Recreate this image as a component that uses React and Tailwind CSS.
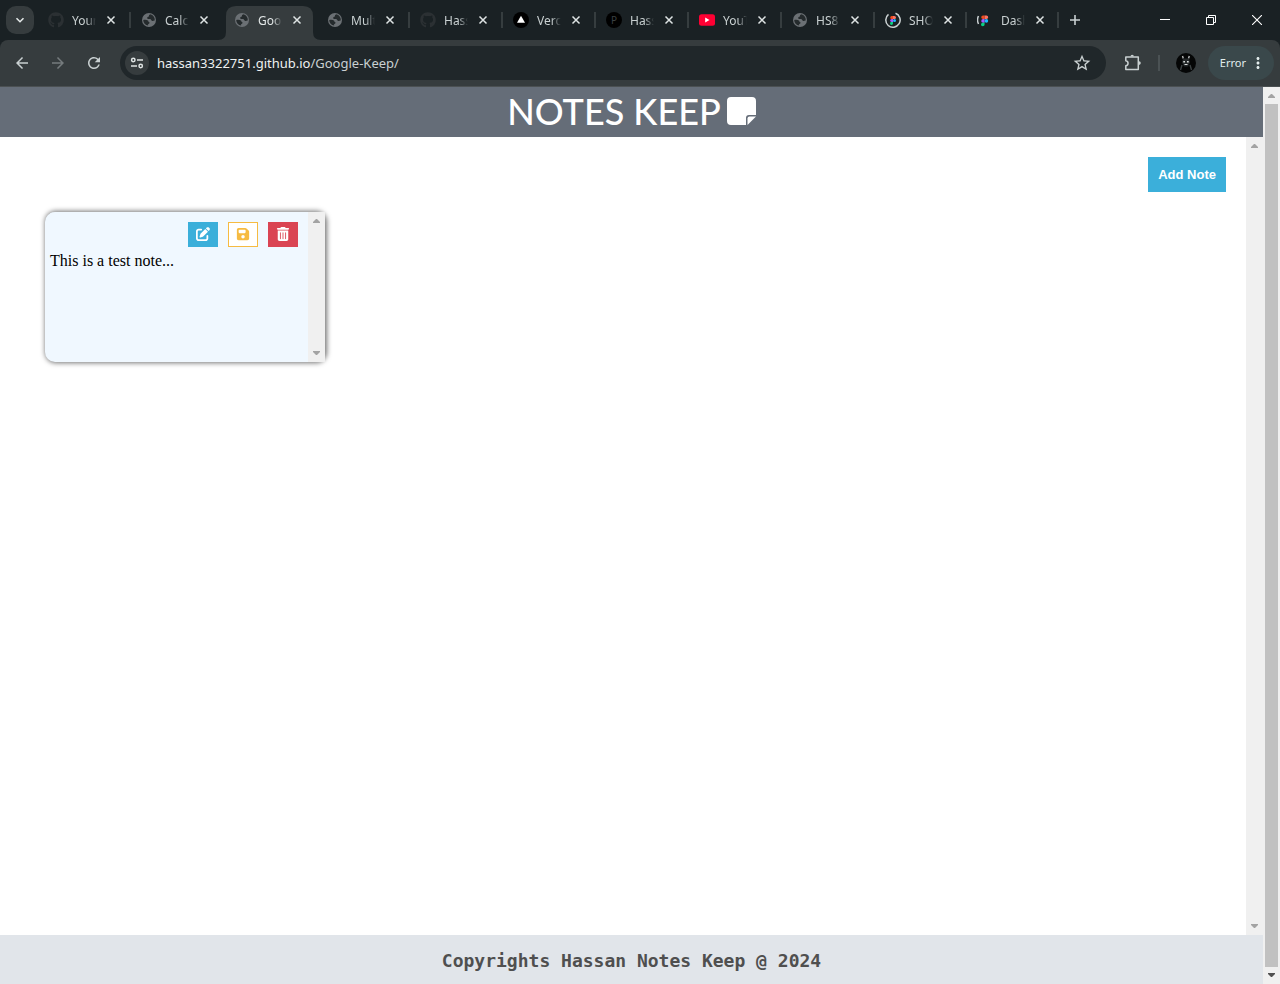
import React from "react";
import { FaGithub } from "react-icons/fa";
import { FaFloppyDisk, FaPenToSquare, FaTrashCan } from "react-icons/fa6";
import { MdArrowBack, MdArrowForward, MdRefresh, MdStarBorder, MdMoreVert } from "react-icons/md";

function Globe() {
  return (
    <svg viewBox="0 0 16 16" className="size-4" aria-hidden="true">
      <circle cx="8" cy="8" r="7" fill="#6b7074" />
      <path d="M9.200 2.300c-.9.600-1.400 1.100-1.200 1.800.3.900-1.900.7-1.900 2 0 1.200 1.600 1 2.800 1 1.500.1 1.100 1.700 2.300 1.900 1 .1 1.500-.5 2.600-.5.200-3-1.600-5.500-4.600-6.200z" fill="#252b2d" />
      <path d="M2.200 8c1.500-.3 3.700-.3 4.700.4.9.600.2 1.500 1.100 1.700 1 .3.600 1.700-.4 1.800-.8.100-.6.900-.3 1.700C4.200 13.200 2.300 10.900 2.200 8z" fill="#252b2d" />
    </svg>
  );
}

function Github() {
  return <FaGithub className="size-4 text-[#2b3033]" aria-hidden="true" />;
}

function Vercel() {
  return (
    <svg viewBox="0 0 16 16" className="size-4" aria-hidden="true">
      <circle cx="8" cy="8" r="8" fill="#000" />
      <path d="M8 3.800l4 7H4z" fill="#fff" />
    </svg>
  );
}

function LetterP() {
  return (
    <span className="flex size-4 items-center justify-center rounded-full bg-black text-[10px] text-[#3b4043]">P</span>
  );
}

function Youtube() {
  return (
    <svg viewBox="0 0 16 16" className="size-4" aria-hidden="true">
      <rect y="2.300" width="16" height="11.400" rx="2.500" fill="#ff0033" />
      <path d="M6.200 5.500v5l4.300-2.500z" fill="#fff" />
    </svg>
  );
}

function FigmaMark() {
  return (
    <g>
      <path d="M8 4H6.700a1.500 1.500 0 0 0 0 3H8z" fill="#f24e1e" />
      <path d="M8 4h1.500a1.500 1.500 0 0 1 0 3H8z" fill="#ff7262" />
      <path d="M8 7H6.700a1.500 1.500 0 0 0 0 3H8z" fill="#a259ff" />
      <circle cx="9.500" cy="8.500" r="1.500" fill="#1abcfe" />
      <path d="M6.700 10H8v1.500A1.500 1.500 0 1 1 6.700 10z" fill="#0acf83" />
    </g>
  );
}

function FigmaRing() {
  return (
    <svg viewBox="0 0 16 16" className="size-4" aria-hidden="true">
      <path d="M3.500 2.400A7.200 7.200 0 1 0 10.500 1.300" fill="none" stroke="#c9d0d1" strokeWidth="1.500" />
      <FigmaMark />
    </svg>
  );
}

function FigmaSmall() {
  return (
    <svg viewBox="0 0 16 16" className="size-4" aria-hidden="true">
      <path d="M1.500 4q-2 4 0 8" fill="none" stroke="#c9d0d1" strokeWidth="1.500" />
      <g transform="translate(-2 -1.300) scale(1.200)"><FigmaMark /></g>
    </svg>
  );
}

const tabs = [
  { title: "Your", Icon: Github, line: true },
  { title: "Calc", Icon: Globe },
  { title: "Goo", Icon: Globe, active: true },
  { title: "Mult", Icon: Globe, line: true },
  { title: "Hass", Icon: Github, line: true },
  { title: "Verc", Icon: Vercel, line: true },
  { title: "Hass", Icon: LetterP, line: true },
  { title: "YouT", Icon: Youtube, line: true },
  { title: "HS8", Icon: Globe, line: true },
  { title: "SHO", Icon: FigmaRing, line: true, narrow: true },
  { title: "Dash", Icon: FigmaSmall, line: true, narrow: true },
];

function CloseIcon() {
  return (
    <svg viewBox="0 0 10 10" className="size-[10px]" fill="none" stroke="currentColor" strokeWidth="1.500" aria-hidden="true">
      <path d="M1.500 1.500l7 7M8.500 1.500l-7 7" />
    </svg>
  );
}

function Tab({ title, Icon, active, line, narrow }) {
  return (
    <li className={"relative flex h-10 items-center " + (narrow ? "w-[92px]" : "w-[93px]")}>
      {active && (
        <svg viewBox="0 0 103 34" className="absolute -left-[6px] bottom-0 h-[34px] w-[103px]" fill="#363c3e" aria-hidden="true">
          <path d="M0 34q8 0 8-8V10Q8 0 18 0h67q10 0 10 10v16q0 8 8 8z" />
        </svg>
      )}
      <div className="relative flex grow items-center pl-[10px]">
        <Icon />
        <span className={"ml-2 w-6 overflow-hidden whitespace-nowrap pt-[2px] text-xs [mask-image:linear-gradient(to_right,#000_60%,transparent)] " + (active ? "text-[#e3e8e8]" : "text-[#c9d0d1]")}>
          {title}
        </span>
        <button type="button" aria-label={"Close tab " + title} className="ml-[7px] flex size-4 items-center justify-center text-[#dfe4e4]">
          <CloseIcon />
        </button>
      </div>
      {line && <span className="h-4 w-[2px] bg-[#363d3f]" />}
    </li>
  );
}

function TabStrip() {
  return (
    <div className="flex h-10 items-center bg-[#1a2124]">
      <button type="button" aria-label="Search tabs" className="ml-[6px] flex size-7 items-center justify-center rounded-[10px] bg-[#363c3e] text-[#e3e8e8]">
        <svg viewBox="0 0 10 10" className="size-[10px]" fill="none" stroke="currentColor" strokeWidth="1.600" aria-hidden="true"><path d="M1.500 3.200L5 6.700l3.500-3.500" /></svg>
      </button>
      <ul className="ml-1 flex">
        {tabs.map((t, i) => <Tab key={i} {...t} />)}
      </ul>
      <button type="button" aria-label="New tab" className="ml-[2px] flex size-7 items-center justify-center text-[#c9d0d1]">
        <svg viewBox="0 0 12 12" className="size-3" stroke="currentColor" strokeWidth="1.600" aria-hidden="true"><path d="M6 1v10M1 6h10" /></svg>
      </button>
      <div className="ml-auto flex text-white">
        <button type="button" aria-label="Minimize" className="flex h-10 w-[46px] items-center justify-center">
          <svg viewBox="0 0 10 10" className="size-[10px]" aria-hidden="true"><path d="M0 4h10v1H0z" fill="currentColor" /></svg>
        </button>
        <button type="button" aria-label="Restore" className="flex h-10 w-[46px] items-center justify-center">
          <svg viewBox="0 0 10 10" className="size-[10px]" fill="none" stroke="currentColor" aria-hidden="true"><path d="M.5 2.500h7v7h-7zM2.500 2.500v-2h7v7h-2" /></svg>
        </button>
        <button type="button" aria-label="Close window" className="flex h-10 w-[46px] items-center justify-center">
          <svg viewBox="0 0 10 10" className="size-[10px]" fill="none" stroke="currentColor" strokeWidth="1.100" aria-hidden="true"><path d="M0 0l10 10M10 0L0 10" /></svg>
        </button>
      </div>
    </div>
  );
}

function Toolbar() {
  return (
    <div className="bg-[#1a2124]">
      <div className="flex h-[47px] items-center rounded-t-lg border-b border-[#4b5052] bg-[#363c3e] pr-[6px] pl-[13px] text-[#c9d0d1]">
        <button type="button" aria-label="Back"><MdArrowBack className="size-[18px]" /></button>
        <button type="button" aria-label="Forward" className="ml-[18px] text-[#757b7d]"><MdArrowForward className="size-[18px]" /></button>
        <button type="button" aria-label="Reload" className="ml-[18px]"><MdRefresh className="size-[18px]" /></button>
        <div className="ml-[17px] flex h-[34px] grow items-center rounded-full bg-[#20272a] pr-[14px] pl-[5px]">
          <button type="button" aria-label="Site information" className="flex size-6 items-center justify-center rounded-full bg-[#363c3e]">
            <svg viewBox="0 0 14 14" className="size-[14px]" fill="none" stroke="#dfe4e4" strokeWidth="1.500" aria-hidden="true">
              <circle cx="3.300" cy="4" r="1.700" /><path d="M7 4h6M1 10h6" /><circle cx="10.700" cy="10" r="1.700" />
            </svg>
          </button>
          <div className="relative ml-2 h-5 grow text-[13px] leading-5">
            <span aria-hidden="true" className="pointer-events-none absolute inset-0 text-[#c9d0d1]">
              <span className="text-[#eef1f1]">hassan3322751.github.io</span>/Google-Keep/
            </span>
            <input aria-label="Address" defaultValue="hassan3322751.github.io/Google-Keep/" className="block h-5 w-full bg-transparent text-transparent outline-none" />
          </div>
          <button type="button" aria-label="Bookmark this page"><MdStarBorder className="size-5" /></button>
        </div>
        <button type="button" aria-label="Extensions" className="ml-[18px]">
          <svg viewBox="0 0 18 18" className="size-[18px]" fill="none" stroke="currentColor" strokeWidth="1.500" strokeLinejoin="round" aria-hidden="true">
            <path d="M1.800 3h12.500v12.500H1.800v-3.700c3-.5 3-4.600 0-5.100z" />
            <path d="M6.500 2.500a1.700 1.700 0 0 1 3.400 0zM15 7.300a1.700 1.700 0 0 1 0 3.600z" fill="currentColor" stroke="none" />
          </svg>
        </button>
        <span className="mx-4 h-4 w-[2px] bg-[#4b5254]" />
        <button type="button" aria-label="Profile">
          <svg viewBox="0 0 20 20" className="size-5" aria-hidden="true">
            <circle cx="10" cy="10" r="10" fill="#050606" />
            <path d="M6.500 3l.8 2.500M13.300 3l-.8 2.500" stroke="#b9bcbc" strokeWidth="1.400" />
            <path d="M7 5.500h6l1 4-2 4H8l-2-4z" fill="#25292a" />
            <path d="M4.500 17l1.500-5M15.500 17L14 12" stroke="#3c4244" strokeWidth="1.400" />
            <path d="M7.300 8H9v1.500H7.300zM11 8h1.700v1.500H11zM8.500 11h3v1h-3z" fill="#d6dada" />
          </svg>
        </button>
        <button type="button" className="ml-3 flex h-[34px] items-center rounded-full bg-[#3a484b] pr-[7px] pl-3 text-[11px] text-[#e3eded]">
          Error<MdMoreVert className="ml-[3px] size-[18px]" aria-hidden="true" />
        </button>
      </div>
    </div>
  );
}

function Arrow({ down, dark }) {
  return (
    <svg viewBox="0 0 17 17" className={"size-[17px] shrink-0 " + (dark ? "text-[#505050]" : "text-[#a3a3a3]")} fill="currentColor" aria-hidden="true">
      <path d={down ? "M5 6h7v1l-3 3H8L5 7z" : "M5 11h7v-1L9 7H8l-3 3z"} />
    </svg>
  );
}

function Scrollbar() {
  return (
    <div className="flex w-[17px] shrink-0 flex-col justify-between bg-[#f0f0f0]" aria-hidden="true">
      <Arrow />
      <Arrow down />
    </div>
  );
}

function Note() {
  return (
    <article className="flex h-[150px] w-[280px] rounded-[10px] bg-[#f0f8ff] shadow-[1px_0_5px_1px_#777]">
      <div className="grow pt-[10px]">
        <div className="flex justify-end gap-[10px] pr-[10px]">
          <button type="button" aria-label="Edit note" className="flex h-[25px] w-[30px] items-center justify-center bg-[#3bafda] pb-[2px] text-white"><FaPenToSquare className="size-[14px]" /></button>
          <button type="button" aria-label="Save note" className="flex h-[25px] w-[30px] items-center justify-center border border-[#f6bb42] bg-white pb-px text-[#f6bb42]"><FaFloppyDisk className="size-[14px]" /></button>
          <button type="button" aria-label="Delete note" className="flex h-[25px] w-[30px] items-center justify-center bg-[#da4453] pb-[2px] text-white"><FaTrashCan className="size-[14px]" /></button>
        </div>
        <p className="px-[5px] pt-[5px] font-['Liberation_Serif',serif] text-base leading-[18px] text-black">This is a test note...</p>
      </div>
      <Scrollbar />
    </article>
  );
}

export default function App() {
  return (
    <div className="flex h-screen flex-col overflow-hidden bg-white font-['Noto_Sans',sans-serif]">
      <TabStrip />
      <Toolbar />
      <div className="flex min-h-0 grow">
        <div className="flex min-w-0 grow flex-col">
          <header className="flex h-[50px] shrink-0 items-center justify-center gap-[6px] bg-[#656d78] pb-[2px] text-white">
            <h1 className="font-[Lato,sans-serif] text-4xl leading-[46px] font-medium">NOTES KEEP</h1>
            <svg viewBox="0 0 29 29" className="size-[29px]" fill="currentColor" aria-hidden="true">
              <path d="M4 0h21a4 4 0 0 1 4 4v14h-7a3 3 0 0 0-3 3v7H4a4 4 0 0 1-4-4V4a4 4 0 0 1 4-4z" />
              <path d="M20.500 28v-6.500a2 2 0 0 1 2-2H29z" />
            </svg>
          </header>
          <div className="flex min-h-0 grow">
            <main className="grow p-5">
              <div className="flex justify-end">
                <button type="button" className="h-[35px] bg-[#3bafda] px-[10px] font-['Liberation_Sans',sans-serif] text-[13px] font-bold text-white">Add Note</button>
              </div>
              <div className="px-[25px] pt-5"><Note /></div>
            </main>
            <Scrollbar />
          </div>
          <footer className="flex h-[49px] shrink-0 items-center justify-center bg-[#e1e5ea] pt-[2px] font-['DejaVu_Sans_Mono',monospace] text-lg font-bold text-[#4f4f4f]">
            Copyrights Hassan Notes Keep @ 2024
          </footer>
        </div>
        <div className="flex w-[17px] shrink-0 flex-col items-center bg-[#f0f0f0]" aria-hidden="true">
          <Arrow />
          <div className="w-[13px] grow bg-[#c1c1c1]" />
          <Arrow down dark />
        </div>
      </div>
    </div>
  );
}
